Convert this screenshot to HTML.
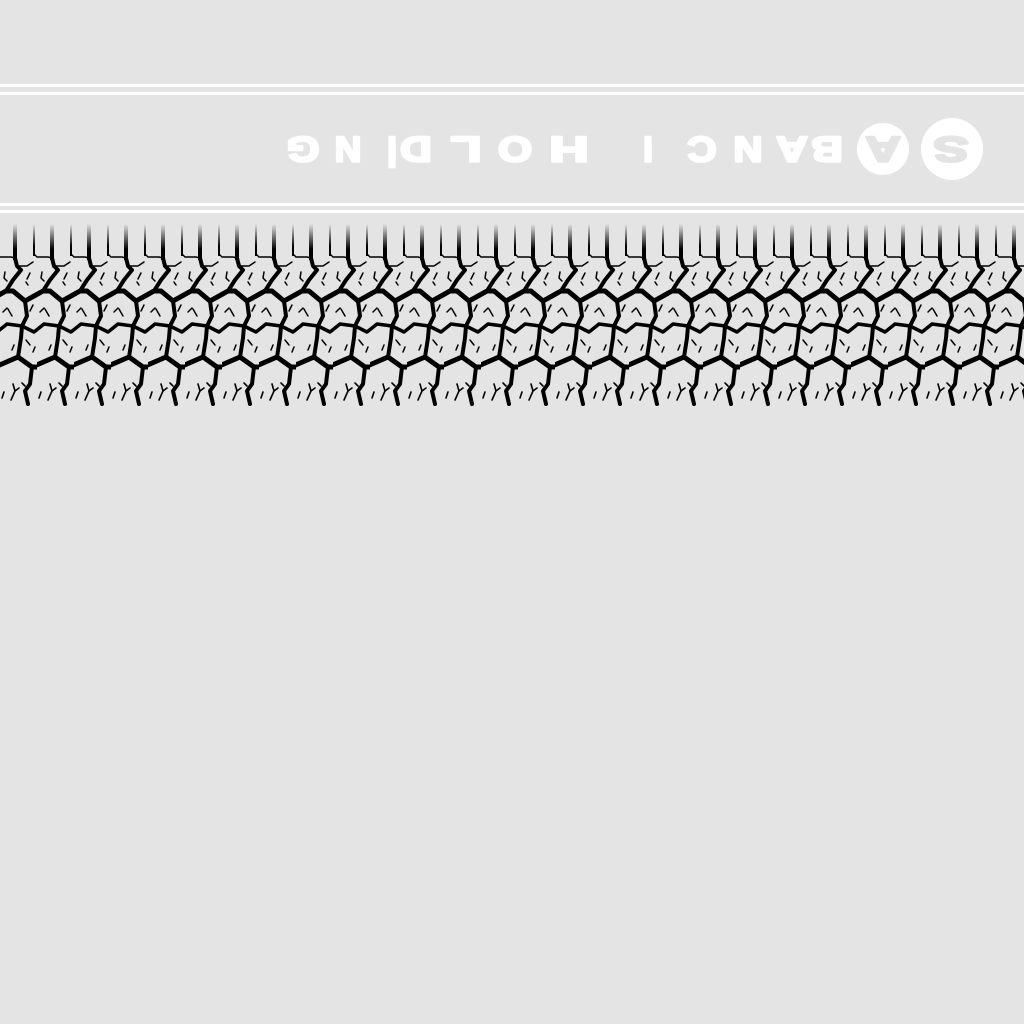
<!DOCTYPE html>
<html><head><style>
html,body{margin:0;padding:0;background:#e4e4e4;width:1024px;height:1024px;overflow:hidden}
svg{display:block}
</style></head><body>
<svg width="1024" height="1024" viewBox="0 0 1024 1024" xmlns="http://www.w3.org/2000/svg" font-family="Liberation Sans, sans-serif" font-weight="bold">
<defs>
<linearGradient id="fade" x1="0" y1="0" x2="0" y2="1">
<stop offset="0" stop-color="#000" stop-opacity="0"/>
<stop offset="0.7" stop-color="#000" stop-opacity="1"/>
</linearGradient>
<pattern id="tire" x="0" y="224" width="37" height="184" patternUnits="userSpaceOnUse">
<g transform="translate(0,-224)" fill="none" stroke="#000" stroke-linejoin="round" stroke-linecap="round">
<rect x="13" y="224" width="4" height="36" fill="url(#fade)" stroke="none"/>
<rect x="33" y="224" width="2" height="32" fill="url(#fade)" stroke="none"/>
<path d="M15,258 L17,266 L21,270 L13,280 L6,291" stroke-width="4"/>
<path d="M-3,257 L11,257 L15,258 M34,254 L38,258 L48,259 M17,266 L27,266 L33,262" stroke-width="1.5"/>
<path d="M5,272 L4,278 L7,281 M30,273 L27,279 M26,282 L28,285" stroke-width="1.5"/>
<path d="M-31,291 L-24,291 L-12,301 L6,291 L13,291 L25,301 L43,291 L50,291" stroke-width="5"/>
<path d="M25,301 L27,316 L22,326 L21,338 L18,357" stroke-width="4"/>
<path d="M-30,324 L-15,326 L-3,332 L7,324 L22,326 L34,332 L44,324" stroke-width="3.5"/>
<path d="M-19,367 L-5,367 L18,357 L32,367 L42,367 L55,357" stroke-width="5"/>
<path d="M8,309 L12,316 M30,311 L33,305 M3,312 L7,308 M14,345 L12,350 M35,347 L33,352 M26,340 L30,345" stroke-width="1.5"/>
<path d="M32,367 L30,384 L25,391 L28,404" stroke-width="4"/>
<path d="M13,384 L15,391 L11,400 M15,391 L19,388 M4,392 L2,398 M22,383 L25,386" stroke-width="1.6"/>
</g>
</pattern>
</defs>
<rect x="0" y="84" width="1024" height="3" fill="#fff"/>
<rect x="0" y="92" width="1024" height="3" fill="#fff"/>
<rect x="0" y="203" width="1024" height="3" fill="#fff"/>
<rect x="0" y="210" width="1024" height="3" fill="#fff"/>
<rect x="0" y="224" width="1024" height="184" fill="url(#tire)"/>
<g fill="#fff">
<circle cx="952" cy="149" r="31"/>
<circle cx="883" cy="149" r="26"/>
</g>
<g font-size="35" stroke-width="2.5" stroke-linejoin="round">
<text x="951" y="162" fill="#e4e4e4" stroke="#e4e4e4" text-anchor="middle" transform="rotate(180 951 149.5) translate(951 0) scale(1.5 1) translate(-951 0)">S</text>
<text x="883" y="162" fill="#e4e4e4" stroke="#e4e4e4" text-anchor="middle" transform="rotate(180 883 149.5) translate(883 0) scale(1.4 1) translate(-883 0)">A</text>
<g fill="#fff" stroke="#fff">
<text x="827" y="162" text-anchor="middle" transform="rotate(180 827 149.5) translate(827 0) scale(1.25 1) translate(-827 0)">B</text>
<text x="792" y="162" text-anchor="middle" transform="rotate(180 792 149.5) translate(792 0) scale(1.25 1) translate(-792 0)">A</text>
<text x="748" y="162" text-anchor="middle" transform="rotate(180 748 149.5) translate(748 0) scale(1.15 1) translate(-748 0)">N</text>
<text x="702" y="162" text-anchor="middle" transform="rotate(180 702 149.5) translate(702 0) scale(1.15 1) translate(-702 0)">C</text>
<text x="648" y="162" text-anchor="middle" transform="rotate(180 648 149.5)">I</text>
<text x="569" y="162" text-anchor="middle" transform="rotate(180 569 149.5) translate(569 0) scale(1.55 1) translate(-569 0)">H</text>
<text x="515" y="162" text-anchor="middle" transform="rotate(180 515 149.5) translate(515 0) scale(1.25 1) translate(-515 0)">O</text>
<text x="466" y="162" text-anchor="middle" transform="rotate(180 466 149.5) translate(466 0) scale(1.45 1) translate(-466 0)">L</text>
<text x="416" y="162" text-anchor="middle" transform="rotate(180 416 149.5) translate(416 0) scale(1.25 1) translate(-416 0)">D</text>
<text x="392" y="162" text-anchor="middle" transform="rotate(180 392 149.5)">İ</text>
<text x="348" y="162" text-anchor="middle" transform="rotate(180 348 149.5) translate(348 0) scale(1.05 1) translate(-348 0)">N</text>
<text x="303" y="162" text-anchor="middle" transform="rotate(180 303 149.5) translate(303 0) scale(1.2 1) translate(-303 0)">G</text>
</g>
</g>
</svg>
</body></html>
